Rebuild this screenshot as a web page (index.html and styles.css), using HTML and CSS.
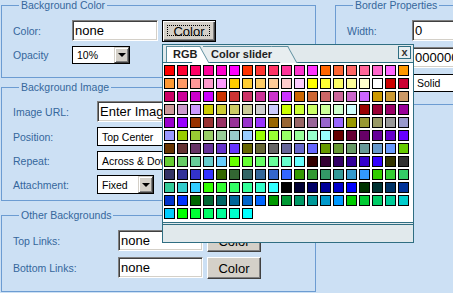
FILE: index.html
```html
<!DOCTYPE html>
<html lang="en">

<head>
    <meta charset="UTF-8">
    <meta name="viewport" content="width=device-width, initial-scale=1.0">
    <title>Background Settings</title>
    <link rel="stylesheet" href="styles.css">
</head>

<body>
    <div class="page">
        <div class="column left">
            <fieldset class="group group-color">
                <legend>Background Color</legend>
                <div class="rows">
                    <label>Color:</label>
                    <div class="field">
                        <input type="text" class="text color-input" value="none">
                        <button class="btn focused">Color</button>
                    </div>
                    <label>Opacity</label>
                    <div class="field">
                        <div class="select opacity"><span>10%</span><span class="arrow"></span></div>
                    </div>
                </div>
            </fieldset>

            <fieldset class="group group-image">
                <legend>Background Image</legend>
                <div class="rows">
                    <label>Image URL:</label>
                    <div class="field">
                        <input type="text" class="text wide-input" value="Enter Image URL">
                    </div>
                    <label>Position:</label>
                    <div class="field">
                        <div class="select wide"><span>Top Center</span><span class="arrow"></span></div>
                    </div>
                    <label>Repeat:</label>
                    <div class="field">
                        <div class="select wide"><span>Across &amp; Down</span><span class="arrow"></span></div>
                    </div>
                    <label>Attachment:</label>
                    <div class="field">
                        <div class="select attachment"><span>Fixed</span><span class="arrow"></span></div>
                    </div>
                </div>
            </fieldset>

            <fieldset class="group group-other">
                <legend>Other Backgrounds</legend>
                <div class="rows">
                    <label>Top Links:</label>
                    <div class="field">
                        <input type="text" class="text link-input" value="none">
                        <button class="btn">Color</button>
                    </div>
                    <label>Bottom Links:</label>
                    <div class="field">
                        <input type="text" class="text link-input" value="none">
                        <button class="btn">Color</button>
                    </div>
                </div>
            </fieldset>
        </div>

        <div class="column right">
            <fieldset class="group group-border">
                <legend>Border Properties</legend>
                <div class="rows">
                    <label>Width:</label>
                    <div class="field"><input type="text" class="text border-input" value="0"></div>
                    <label>Color:</label>
                    <div class="field"><input type="text" class="text border-input" value="000000"></div>
                    <label>Style:</label>
                    <div class="field">
                        <div class="select border-style"><span>Solid</span><span class="arrow"></span></div>
                    </div>
                </div>
            </fieldset>
        </div>
    </div>

    <div class="picker">
        <div class="picker-head">
            <div class="tabs">
                <div class="tab active">RGB</div>
                <div class="tab">Color slider</div>
            </div>
            <div class="close">x</div>
        </div>
        <div class="swatches" id="swatches"></div>
        <div class="picker-status"></div>
    </div>

    <script>
        // web safe palette, red descending, green and blue ascending
        const swatches = document.getElementById('swatches');
        const reds = ['ff', 'cc', '99', '66', '33', '00'];
        const steps = ['00', '33', '66', '99', 'cc', 'ff'];

        reds.forEach(function (red) {
            steps.forEach(function (green) {
                steps.forEach(function (blue) {
                    const cell = document.createElement('div');
                    cell.className = 'swatch';
                    cell.style.backgroundColor = '#' + red + green + blue;
                    swatches.appendChild(cell);
                });
            });
        });
    </script>
</body>

</html>
```

FILE: styles.css
```css
* {
    box-sizing: border-box;
}

body {
    margin: 0;
    background-color: #cce0f4;
    font-family: "Liberation Sans", Arial, sans-serif;
    font-size: 10.5px;
    color: #35679c;
    overflow: hidden;
}

.page {
    display: flex;
    align-items: flex-start;
}

.column.left {
    width: 315px;
    margin-left: 1px;
    flex-shrink: 0;
}

/* the border box runs on past the window edge, so clip it there */
.column.right {
    width: 118px;
    margin-left: 19px;
    flex-shrink: 0;
    overflow: hidden;
}

/* fieldsets */

.group {
    margin: 0;
    padding: 9px 0 12px 11px;
    border: 1px solid #6c9cd2;
    min-width: 0;
}

.group legend {
    margin-left: 6px;
    padding: 0 2px;
    font-size: 10.5px;
    line-height: 11px;
    color: #35679c;
}

.group-color {
    padding-bottom: 13px;
}

.group-image {
    margin-top: 4px;
    padding-top: 8px;
    padding-bottom: 6px;
}

.group-other {
    margin-top: 9px;
}

.group-border {
    width: 160px;
    padding-bottom: 12px;
}

.rows {
    display: grid;
    align-items: center;
    row-gap: 4px;
}

.group-color .rows {
    grid-template-columns: 59px auto;
}

.group-image .rows {
    grid-template-columns: 84px auto;
    row-gap: 5px;
}

.group-other .rows {
    grid-template-columns: 105px auto;
    row-gap: 5px;
}

.group-border .rows {
    grid-template-columns: 65px auto;
    row-gap: 6px;
}

label {
    white-space: nowrap;
}

.field {
    display: flex;
    align-items: flex-start;
}

/* inputs */

.text {
    height: 21px;
    margin: 0;
    padding: 0 2px;
    font-family: "Liberation Sans", Arial, sans-serif;
    font-size: 13px;
    color: #000;
    background-color: #fff;
    border: 1px solid;
    border-color: #808080 #fff #fff #808080;
    box-shadow: inset 1px 1px 0 #404040, inset -1px -1px 0 #d4d0c8;
    outline: none;
}

.color-input {
    width: 86px;
    margin-right: 4px;
}

.wide-input {
    width: 160px;
}

.link-input {
    width: 85px;
    margin-right: 4px;
}

.border-input {
    width: 70px;
}

.btn {
    position: relative;
    width: 54px;
    height: 22px;
    padding: 0;
    font-family: "Liberation Sans", Arial, sans-serif;
    font-size: 13px;
    color: #000;
    background-color: #d4d0c8;
    border: 1px solid;
    border-color: #fff #404040 #404040 #fff;
    box-shadow: inset -1px -1px 0 #808080;
}

.btn.focused {
    border-color: #000;
    box-shadow: inset 1px 1px 0 #fff, inset -1px -1px 0 #404040, inset -2px -2px 0 #808080;
}

.btn.focused::after {
    content: "";
    position: absolute;
    top: 4px;
    left: 4px;
    right: 5px;
    bottom: 5px;
    border: 1px dotted #000;
}

/* fake select boxes */

.select {
    display: flex;
    align-items: center;
    height: 18px;
    padding-left: 4px;
    background-color: #fff;
    border: 1px solid #000;
    color: #000;
    font-size: 10.5px;
    white-space: nowrap;
    overflow: hidden;
}

.select .arrow {
    flex-shrink: 0;
    display: flex;
    align-items: center;
    justify-content: center;
    width: 15px;
    height: 100%;
    margin-left: auto;
    background-color: #d4d0c8;
    border: 1px solid;
    border-color: #d4d0c8 #404040 #404040 #d4d0c8;
    box-shadow: inset 1px 1px 0 #fff, inset -1px -1px 0 #808080;
}

.select .arrow::before {
    content: "";
    border-top: 4px solid #000;
    border-left: 4px solid transparent;
    border-right: 4px solid transparent;
}

.opacity {
    width: 58px;
}

.wide {
    width: 160px;
    height: 19px;
}

.attachment {
    width: 57px;
    height: 19px;
}

.border-style {
    width: 70px;
}

/* colour picker popup */

.picker {
    position: absolute;
    left: 162px;
    top: 44px;
    width: 252px;
    height: 199px;
    background-color: #e1e9ec;
    border: 1px solid #2f6e82;
}

.picker-head {
    display: flex;
    align-items: flex-start;
    height: 18px;
    padding-top: 1px;
    border-bottom: 1px solid #2f6e82;
}

.tabs {
    display: flex;
    margin-left: 3px;
}

.tab {
    position: relative;
    z-index: 1;
    width: 85px;
    height: 16px;
    margin-left: 3px;
    padding-left: 8px;
    line-height: 15px;
    font-size: 11px;
    font-weight: bold;
    color: #1e1e1e;
    background-color: #e8eef0;
    border-top: 1px solid #5b8d9d;
}

.tab::after {
    content: "";
    position: absolute;
    z-index: -1;
    top: -1px;
    right: 0;
    width: 16px;
    height: 16px;
    background-color: inherit;
    border-top: 1px solid #5b8d9d;
    border-right: 1px solid #5b8d9d;
    transform: skewX(29deg);
    transform-origin: top left;
}

.tab.active {
    z-index: 2;
    width: 34px;
    margin-left: 0;
    padding-left: 6px;
    background-color: #fff;
    border-left: 1px solid #5b8d9d;
}

.close {
    width: 13px;
    height: 13px;
    margin-left: auto;
    margin-right: 2px;
    line-height: 10px;
    text-align: center;
    font-size: 11px;
    font-weight: bold;
    color: #333;
    background-color: #e8eef0;
    border: 1px solid #2f6e82;
}

.swatches {
    display: grid;
    grid-template-columns: repeat(19, 11px);
    grid-auto-rows: 11px;
    gap: 2px;
    padding: 2px 0 3px 1px;
    background-color: #fff;
    border-bottom: 1px solid #2f6e82;
}

.swatch {
    border: 1px solid #000;
}

.picker-status {
    margin-top: 1px;
    height: 18px;
    border-top: 1px solid #2f6e82;
}
```
